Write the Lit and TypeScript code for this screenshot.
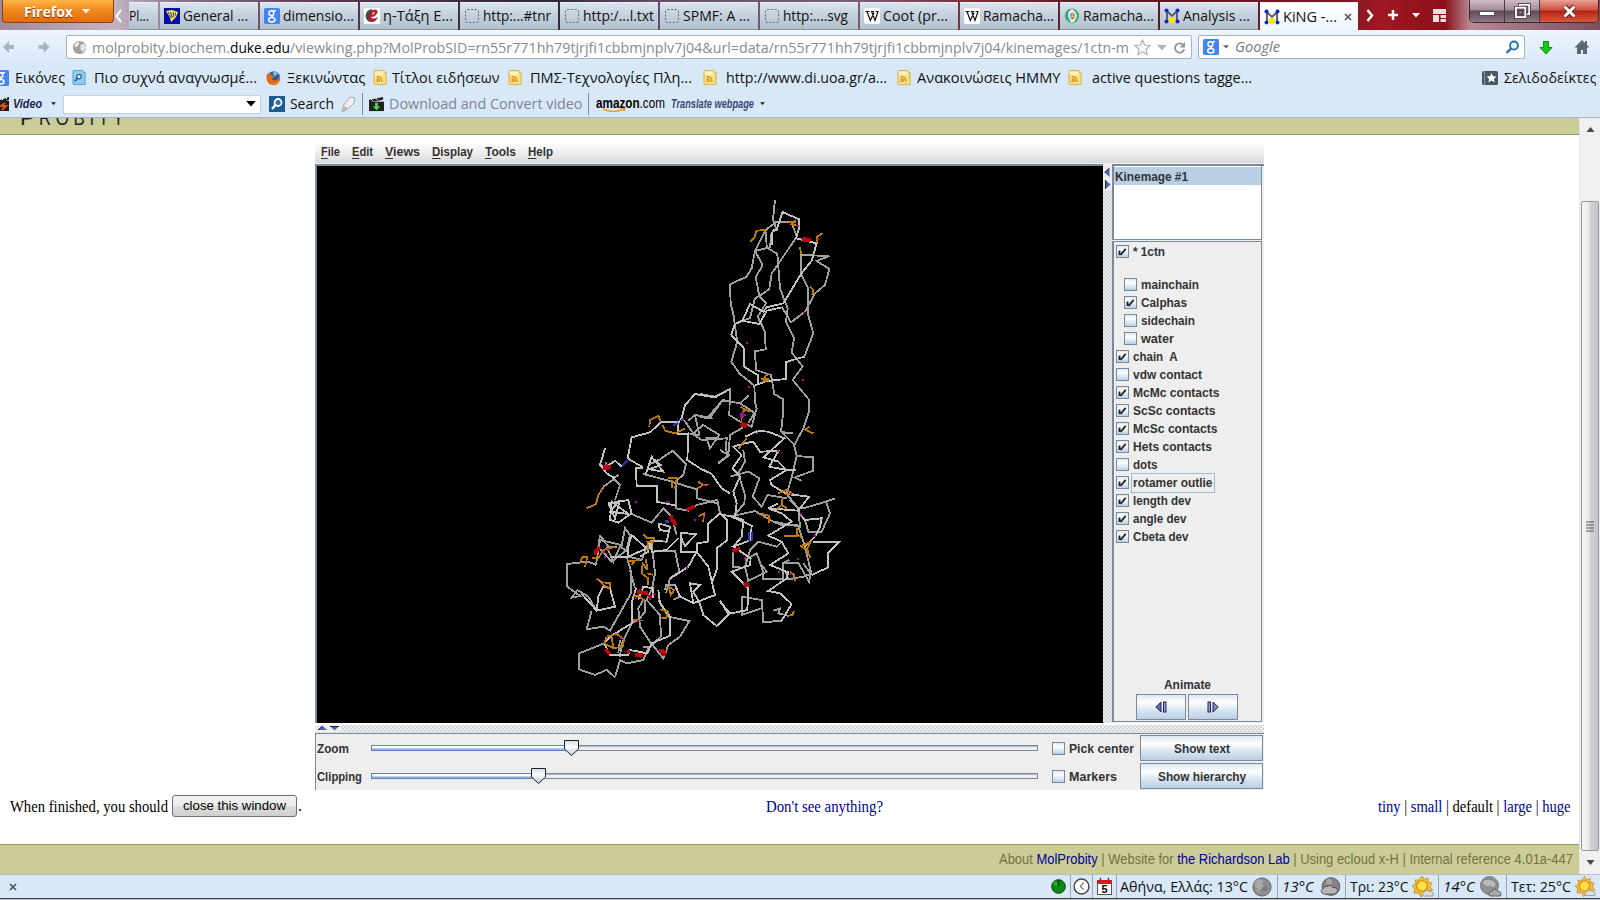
import { LitElement, html, css, svg } from "lit";
import { customElement, property } from "lit/decorators.js";

/** Inline text condensed or widened horizontally to fill a given width. */
@customElement("fit-text")
class FitText extends LitElement {
  static styles = css`
    :host { display: inline-block; white-space: pre; flex: none; }
    .run { display: inline-block; transform-origin: 0 50%; }
  `;
  @property({ type: Number }) w = 0;
  firstUpdated() {
    const run = this.renderRoot.querySelector(".run") as HTMLElement;
    const natural = run.getBoundingClientRect().width;
    this.style.width = this.w + "px";
    if (natural > 0) run.style.transform = `scaleX(${this.w / natural})`;
  }
  render() {
    return html`<span class="run"><slot></slot></span>`;
  }
}

const fit = (text: unknown, w: number) => html`<fit-text .w=${w}>${text}</fit-text>`;

/* ---------- icons ---------- */
const icon = (body: unknown, w = 16, h = 16, box = "0 0 16 16") =>
  html`<svg class="ico" width=${w} height=${h} viewBox=${box}>${body}</svg>`;

const googleG = svg`<rect width="16" height="16" rx="1.5" fill="#4285f4"/>
  <g fill="none" stroke="#fff" stroke-width="1.5"><circle cx="7.4" cy="5.2" r="2.4"/><path d="M9 3.2 12 2.4M9 7.2Q7 8.6 9 9.5"/><ellipse cx="7.8" cy="11.8" rx="3.1" ry="2.2"/></g>`;
const harp = svg`<rect width="16" height="16" fill="#0010a8"/><path d="M2 3 8 2l6 2-2 5-5 5-1-4Z" fill="#ffe94a"/><path d="M4 4l3 6M6.500 4l2 6M9 4l1 5M11.500 4.500v3" stroke="#0010a8" stroke-width=".8"/>`;
const eta = svg`<rect width="16" height="16" fill="#fff"/><path d="M8 1Q2 2 1.500 8q.5 5 5 6-2-4 1-8Z" fill="#4a4448"/><path d="M5 8Q6 1.500 11 1.500q4 .5 2 4T7 9q2 3 7 0-2 5-6 5T5 8Z" fill="#b41f2c"/><path d="M8 7q.5-3 2.500-3 1 1-2.500 3Z" fill="#fff"/>`;
const blank = svg`<rect x="1.5" y="1.5" width="13" height="13" rx="2" fill="none" stroke="#6d7680" stroke-width="1.1" stroke-dasharray="2.2 1.4"/>`;
const wiki = svg`<rect width="16" height="16" rx="2" fill="#fff"/><path d="M1.5 3.5h4M7 3.5h3M11.5 3.5h3M3 3.5l3.3 9L10.2 4.5M7.7 3.5 11 12.500l3-9" fill="none" stroke="#111" stroke-width="1.2"/>`;
const rama = svg`<circle cx="8" cy="8" r="7" fill="#dff0e4" stroke="#5ab896" stroke-width="1"/><path d="M6 1.500Q1 4 3 12M4 3Q2 9 6 14M10 1.500q7 5 1 12.500" fill="none" stroke="#27a06d" stroke-width="1.500"/><path d="M4 2Q1 8 5 13" fill="none" stroke="#3a9bb0"/><ellipse cx="8.500" cy="8" rx="2.800" ry="3.800" fill="#c9b78a"/><path d="M6.500 7h1.300M9 7h1.300M7.500 10h2" stroke="#555"/>`;
const molM = svg`<path d="M3 14V3l5 5 5-5v11" fill="none" stroke="#555a70" stroke-width="1.900"/><g fill="#1526c8"><circle cx="2.500" cy="2.500" r="2"/><circle cx="13.500" cy="2.500" r="2"/><circle cx="2.500" cy="13.500" r="2"/><circle cx="13.500" cy="13.500" r="2"/></g><circle cx="8" cy="12" r="3.200" fill="#ffe800"/>`;
const rss = svg`<path d="M2 0h9q1 0 1 1v1h2v13H2Q1 15 1 14V1Q1 0 2 0Z" fill="#f6de84" stroke="#cfae45" stroke-width=".9"/><rect x="2" y="1" width="9" height="4" fill="#fff3b8"/><g fill="none" stroke="#e48a1d" stroke-width="1.500"><path d="M4 6.500q5.500 0 5.500 5.500M4 9q3 0 3 3"/></g><circle cx="4.600" cy="11.500" r="1" fill="#e48a1d"/>`;
const docSearch = svg`<path d="M2 0h9q1 0 1 1v1h2v13H2Q1 15 1 14V1Q1 0 2 0Z" fill="#93cbec" stroke="#4a94c6" stroke-width=".9"/><circle cx="7.500" cy="6.500" r="2.400" fill="#e3f4ff" stroke="#23628f" stroke-width="1.300"/><path d="M5.800 8.300 3 11.500" stroke="#23628f" stroke-width="1.800"/>`;
const fox = svg`<circle cx="8.200" cy="7.600" r="6.800" fill="#2a5ca8"/><path d="M7 2.500q4-2 6 1L9 6Z" fill="#7fc0ea"/><path d="M1 3.500Q-1 12 5 15q6 2 9-3 2-4 .5-7-.5 4-3.500 5-4 1-5-1.500 1-1 3-1-.5-2.500-2.500-2.500Q4 5 5 3 2.500 3 1 3.500Z" fill="#e06a14"/><path d="M3 12q5 4 10-1-4 6-10 1Z" fill="#ffc83c"/>`;
const star = svg`<path d="M8 1l2.100 4.700 5 .5-3.800 3.400 1.100 5L8 12.100l-4.400 2.500 1.100-5L.9 6.200l5-.5Z" fill="#f5f8fb" stroke="#a9b0b8" stroke-width="1.100"/>`;
const moon = svg`<circle cx="11" cy="11" r="10" fill="#8d8d8d" stroke="#5c5c5c"/><circle cx="8.500" cy="8" r="5.500" fill="#a9a9a9"/><circle cx="13" cy="7" r="2" fill="#8a8a8a"/><circle cx="14" cy="13" r="3" fill="#7c7c7c"/><circle cx="7" cy="15" r="2" fill="#a2a2a2"/>`;
const moonCloud = svg`<circle cx="12" cy="10" r="9.300" fill="#858585" stroke="#5a5a5a"/><circle cx="10" cy="5" r="3" fill="#a8a8a8"/><path d="M3 17q-3-3 1-5 1-3 4-2 3-3 6 1 5 0 5 3 0 4-4 4H5Z" fill="#b5b5b5" stroke="#4c4c4c"/>`;
const moonCloud2 = svg`<circle cx="10" cy="9.500" r="9" fill="#909090" stroke="#777"/><path d="M2 6q6-6 14 0 2 5-3 6-2-3-5-1-4-1-6-5Z" fill="#b9b9b9" stroke="#777" stroke-width=".8"/><path d="M10 20q-2-4 3-5 2-4 5 0 5 1 3 5Z" fill="#a9a9a9" stroke="#5c5c5c"/>`;
const sun = svg`<path d="M10 0l2 3.500L16 2l0 4 4 1-2 4 3 3-5 1 0 4-4-1-3 3-2-4-5 0 1-4-3-3 4-2-1-4 4 0Z" fill="#f3c03c" stroke="#b98a2a" stroke-width=".8"/><circle cx="10" cy="10" r="5.400" fill="#ffe24a" stroke="#e08a14" stroke-width="1.300"/><path d="M11 20q-2-3 1-4 2-3 5-1 5 0 4 5Z" fill="#ddd" stroke="#999"/>`;

const tabs = [
  { i: harp, t: "General ...", w: 65 }, { i: googleG, t: "dimensio...", w: 71 },
  { i: eta, t: "η-Τάξη Ε...", w: 70 }, { i: blank, t: "http:...#tnr", w: 68 },
  { i: blank, t: "http:/...l.txt", w: 71 }, { i: blank, t: "SPMF: A ...", w: 67 },
  { i: blank, t: "http:....svg", w: 65 }, { i: wiki, t: "Coot (pr...", w: 65 },
  { i: wiki, t: "Ramacha...", w: 71 }, { i: rama, t: "Ramacha...", w: 71 },
  { i: molM, t: "Analysis ...", w: 67 },
];

const bookmarks = [
  { i: docSearch, cell: 194, lead: 7, t: "Πιο συχνά αναγνωσμέ...", w: 163 },
  { i: fox, cell: 107, lead: 6, t: "Ξεκινώντας", w: 78.5 },
  { i: rss, cell: 135, lead: 4, t: "Τίτλοι ειδήσεων", w: 107.5 },
  { i: rss, cell: 194.5, lead: 7, t: "ΠΜΣ-Τεχνολογίες Πλη...", w: 162 },
  { i: rss, cell: 194.5, lead: 8, t: "http://www.di.uoa.gr/a...", w: 161 },
  { i: rss, cell: 171, lead: 5, t: "Ανακοινώσεις ΗΜΜΥ", w: 143.5 },
  { i: rss, cell: 190, lead: 9, t: "active questions tagge...", w: 160 },
];

const groups = [
  { t: "mainchain", w: 58, on: false, sub: true }, { t: "Calphas", w: 46, on: true, sub: true },
  { t: "sidechain", w: 54, on: false, sub: true }, { t: "water", w: 33, on: false, sub: true },
  { t: "chain  A", w: 44.5, on: true }, { t: "vdw contact", w: 69, on: false },
  { t: "McMc contacts", w: 86.5, on: true }, { t: "ScSc contacts", w: 82.500, on: true },
  { t: "McSc contacts", w: 84.5, on: true }, { t: "Hets contacts", w: 79, on: true },
  { t: "dots", w: 24.5, on: false }, { t: "rotamer outlie", w: 79.5, on: true, focus: true },
  { t: "length dev", w: 58, on: true }, { t: "angle dev", w: 53.5, on: true },
  { t: "Cbeta dev", w: 55.5, on: true },
] as { t: string; w: number; on: boolean; sub?: boolean; focus?: boolean }[];

/* ---------- backbone traces, in thirds of a pixel, one set per region ---------- */
interface Region { x: number; y: number; grey: string[]; light: string[]; orange: string[]; red: string[]; blue: string[]; dots: string; }
const regions: Region[] = [
  {
    x: 700, y: 190,
    grey: [
      "225,30 219,88 230,120 215,125",
      "230,95 275,97 290,140 235,222 215,250 208,297 178,318 165,325 150,385 127,392",
      "230,95 197,120 165,183 210,172 215,125",
      "198,125 200,172 232,192 240,295 263,355 258,397 282,445 275,487 308,530 278,570 328,630 326,668 310,715 283,765",
      "165,183 188,225 167,262 178,318 198,340 173,380 195,425 197,478 165,484 168,540 213,555 223,612 250,628 248,680 243,725 283,765",
      "165,183 155,235 140,260 90,283 92,340 102,380 104,403 112,455 94,515 118,550 163,587 165,635 170,655 155,710 120,695 88,675 90,597 45,620 0,612",
      "313,500 340,430 323,370 323,292 303,252 303,195 388,198 350,213 388,237 375,285 345,310 315,365 273,397 245,350",
      "0,682 35,684 28,677 68,630 120,640 145,617", "120,640 163,668 145,700", "245,727 278,730",
    ],
    light: [
      "215,125 215,165", "288,145 350,160 335,212 303,252 250,340 200,352 190,365 150,342 127,392 104,403 94,435 132,475 132,530 173,555 173,580",
      "219,120 230,120 247,66 298,88 296,118 288,145",
      "245,352 200,362 178,402 127,392", "163,587 200,573 258,567 258,516 313,500",
    ],
    orange: ["150,155 162,145 170,122 197,120", "265,97 288,93 275,103 297,108", "368,130 350,140 350,158", "300,170 303,193", "330,290 338,297 340,308 335,315", "182,566 208,568 190,574 197,558 208,550", "122,650 135,660 152,665", "135,660 126,670 124,695", "310,717 340,730", "315,720 328,710"],
    red: ["306,147 332,149", "308,150 330,150", "122,700 140,706", "125,704 142,710"],
    blue: [],
    dots: "141,459 147,591 309,570 355,148 293,107 170,728 313,369 123,673 129,670 129,678 134,676 123,679",
  },
  {
    x: 560, y: 370,
    grey: [
      "510,95 487,92 450,143 405,135 385,152", "372,150 400,190 430,165 478,195 450,235 440,205 475,205",
      "395,190 425,210 500,205 497,240 508,255 475,280", "405,135 418,195 385,190",
      "175,315 160,325 180,345 165,390", "165,325 130,350",
      "250,312 325,332 410,358 412,385 472,400", "325,325 350,325 348,415 385,422 410,405 472,390 480,430",
      "265,285 300,268 338,242 378,282 370,315 345,335",
      "210,430 275,458 310,415 335,440 350,495", "120,495 115,530 155,575 200,540 210,495 195,475 185,525 120,510 108,585",
      "140,530 160,575 180,530 205,545", "110,585 85,575 20,582 22,650 60,678 35,683 52,660 85,680 110,722",
      "200,560 212,600 213,670 150,782 130,770 80,778 95,722", "278,545 345,542 358,605 330,625",
      "275,520 285,610 275,660", "315,660 318,645 345,645 360,680 340,690", "330,625 318,670",
      "250,690 235,715 240,770 270,815 310,865 325,825 360,800 388,753 325,740 295,690",
      "275,660 260,690 300,735 303,800 270,830 250,830", "255,690 255,725 235,750 215,760",
      "180,862 185,820 215,760", "165,922 180,870 200,880 250,870 265,835",
      "57,850 133,820", "57,850 57,898 105,915 140,900 165,922", "180,810 175,850",
      "120,495 145,530 170,530", "265,520 245,570 205,560", "210,600 225,655",
    ],
    light: [
      "510,57 465,82 405,72 375,105 365,145 355,158 355,192 385,192 382,270 420,295 455,312 485,355 510,370",
      "360,155 305,155 270,187 215,202 203,265 250,293", "135,235 120,285 140,290 165,272 185,290", "120,285 140,310 165,325",
      "250,293 228,295 230,348 290,347 290,395 348,407", "258,312 275,260 310,305 268,298 302,285 275,262",
      "480,430 445,460 443,515 412,520 410,545 362,547 362,488 408,493 375,528 362,500",
      "480,430 502,450 502,510 470,535 470,600 455,640", "410,545 445,590 465,675 400,700 390,640 420,645 400,665 418,697 430,735 470,768 510,730",
      "410,545 385,590 355,610 330,625", "345,645 360,680 400,700", "145,400 205,390 215,430 175,458 150,450 155,395 205,432 150,425 180,390 165,445 145,400",
      "295,460 330,470 320,515 270,512", "295,460 300,480 330,485", "205,560 205,530 215,495 260,535 205,560 155,560", "270,512 275,545 320,540 355,505", "268,515 265,545 240,560",
      "65,672 110,722 165,710 150,655 130,650 115,680 110,722",
      "228,655 215,700 215,760 150,800 133,820 150,855 205,855 210,840 262,850 275,820 330,797 330,740 300,700 295,660",
      "478,692 510,730", "235,690 250,650 280,655 280,685",
    ],
    orange: ["268,172 270,150 295,138 303,155", "308,165 315,182 345,190 375,175", "80,415 108,402 115,375 130,352", "138,277 142,300", "325,325 350,325 345,358", "335,330 335,355", "415,335 430,345 448,343", "430,345 412,355", "415,440 432,430 430,455", "60,575 68,562 82,562 75,590", "95,565 115,565 130,540 165,530", "110,627 128,637 150,640 148,657", "115,628 130,645 150,657", "200,575 222,572 240,570", "215,585 222,575", "250,492 262,505 282,505 280,515 262,515 265,540", "258,568 262,600 248,580 245,610 265,625 265,645", "262,610 280,615", "325,650 343,660 332,675 328,655", "140,800 170,792 192,808 188,830 160,835 150,830 133,820 140,800", "155,800 160,835", "215,680 235,678 255,692", "300,718 325,725 318,745 300,742", "220,750 250,752"],
    red: ["130,290 152,292", "128,294 148,296", "380,420 405,408", "330,440 338,452", "335,436 335,456", "338,450 348,466", "232,665 265,670", "236,662 250,672", "270,675 272,685", "137,838 152,853", "200,848 210,844", "226,856 250,856", "232,852 246,860", "298,842 318,845", "312,845 312,858", "106,555 108,542 118,532"],
    blue: ["340,165 355,160", "363,153 370,145", "187,288 203,270", "316,455 326,455"],
    dots: "228,396 320,396 325,396 404,450 432,441 132,546 135,560 229,685 270,687 282,672 381,594 183,804 235,752 432,345 145,536 141,286",
  },
  {
    x: 690, y: 370,
    grey: [
      "312,225 320,258 370,262 370,302 315,322 335,333", "272,187 307,188", "175,75 150,100", "160,172 120,195 115,255 85,278 115,255 90,240",
      "120,320 175,305 208,325 188,380 215,410 233,375 290,385", "312,225 320,258 305,322 290,372 325,415", "160,240 165,275 145,310 165,375 163,400 130,440",
      "120,440 195,423 250,455 330,470 325,415 300,390", "325,415 340,415 408,395 435,385", "408,395 420,430 395,485 355,485 345,450",
      "325,470 345,530 365,615 340,580", "205,515 260,530 275,515", "205,515 180,540 165,590 175,633 230,605 215,585",
      "165,570 200,550 218,600 218,627 278,628 278,580 298,570", "278,580 325,580 340,605 357,635 362,610", "285,600 295,628 340,620 365,610",
      "275,752 220,757 215,690 155,680 155,735 213,715", "250,455 275,465 325,465", "128,545 130,590 150,590", "250,722 270,715 265,730 295,737",
    ],
    light: [
      "203,183 235,185 283,205 220,262 265,275 290,300 240,330 245,345 290,372 357,380 325,422 235,415", "235,415 275,430 305,455 235,497 275,515 295,550 240,585 295,607 290,625 235,663 270,670 305,702 275,752",
      "165,200 203,183", "165,220 190,215 210,245 265,243 238,290 290,300 318,300", "165,220 130,230 155,255 128,295 150,320 130,365 140,400 135,440", "265,400 235,415",
      "90,432 125,440 185,467 182,510 130,530 182,565 180,585 125,605 175,655 172,720 115,732 90,692", "130,440 160,450 155,500 130,530", "328,430 345,450 395,445 390,470 375,500 345,530", "365,615 415,592 415,548 447,517 370,515",
    ],
    orange: ["145,237 170,205", "265,370 290,360 305,370 285,372", "260,418 275,405 290,415", "278,380 275,405", "238,458 238,437 218,432 222,442", "282,498 320,498 322,475", "320,490 335,505", "330,530 362,515 350,540 362,565", "335,530 358,545", "300,605 312,615 315,632", "290,738 308,735 312,722"],
    red: ["128,543 150,535", "165,638 168,650", "172,640 174,650"],
    blue: ["177,487 177,513", "186,487 186,513"],
    dots: "264,242 303,372 333,432 375,497 323,567 266,606 302,613 165,565 339,30 41,441",
  },
];

@customElement("app-root")
class AppRoot extends LitElement {
  static styles = css`
    :host { display: flex; flex-direction: column; width: 1600px; height: 900px; overflow: hidden; background: #fff; color: #111; font-family: "Open Sans", "Noto Sans", sans-serif; font-size: 14.5px; line-height: 20px; }
    * { box-sizing: border-box; }
    .ico { flex: none; display: block; }
    .row { display: flex; align-items: center; flex: none; }
    .grow { flex: 1; }
    /* tab strip */
    .tabs { height: 30px; align-items: stretch; background: linear-gradient(90deg, #a08a9c 0, #c4b4c2 115px, #8b7386 180px, #59374a 330px, #2c2a3c 550px, #684a68 650px, #7c6078 850px, #7a3440 960px, #581820 1100px, #7a1824 1340px, #a01824 1380px, #8c1018 1445px, #b88894 1470px, #7a5060 1600px); }
    .ff { width: 112px; height: 23px; margin-left: 2px; border: 1px solid #86401a; border-top: 0; border-radius: 0 0 4px 4px; background: linear-gradient(#ffb547, #f38a1e 45%, #e26b10); color: #fff; font-weight: 700; font-size: 14px; justify-content: center; gap: 9px; padding: 1px 2px 0 0; text-shadow: 0 1px 1px #743000; flex: none; display: flex; align-items: center; }
    .lt { width: 15px; padding: 2px 5px 0 0; justify-content: center; }
    .tab { width: 98px; height: 28px; margin: 2px 2px 0 0; padding: 0 0 0 4px; gap: 3px; background: linear-gradient(#d9e4ee, #c3d0dc 50%, #b3c1ce); border-top: 1px solid #e8eff6; border-bottom: 1px solid #8995a3; overflow: hidden; }
    .tab.part { width: 29px; padding-left: 0; }
    .tab.on { height: 28px; margin-right: 0; background: linear-gradient(#fff, #edf5fc); border-bottom: 0; }
    .tools { gap: 13px; padding-left: 8px; width: 110px; }
    .wins { height: 23px; margin-left: 1px; display: flex; border: 1px solid #3d2c35; border-top: 0; border-radius: 0 0 5px 5px; overflow: hidden; }
    .win { display: flex; align-items: center; justify-content: center; width: 35px; background: linear-gradient(#d0bcc6, #a48c9a 45%, #5f4a58 50%, #907884); border-right: 1px solid #4c3844; }
    .win.close { width: 58px; border: 0; background: linear-gradient(#e8a090, #cf5140 45%, #b02515 50%, #d8583a); }
    /* navigation */
    .chrome { background: linear-gradient(#edf5fc, #d9e8f7 40%); border-bottom: 1px solid #a3b8cc; height: 88px; flex: none; }
    .nav { height: 34px; }
    .field { display: flex; align-items: center; height: 24px; background: #fff; border: 1px solid #9fb2c6; border-radius: 2px; overflow: hidden; }
    .url { width: 1126px; margin-left: 15px; color: #8a8a8a; padding-left: 5px; padding-top: 1px; }
    .dom { color: #000; }
    .search { width: 327px; margin-left: 6px; padding-left: 4px; color: #777; font-style: italic; }
    .bm { height: 28px; }
    .tb { height: 22px; margin-top: 1px; }
    .cell { display: flex; align-items: center; overflow: hidden; flex: none; }
    .combo { width: 198px; height: 19px; background: #fff; border: 1px solid #c4d2e0; display: flex; align-items: center; justify-content: flex-end; padding-right: 4px; }
    .sep { width: 1px; height: 22px; background: #7e8b98; flex: none; }
    .vid { font: italic 700 12px "Liberation Sans", sans-serif; color: #1a2450; }
    .vid.blue { color: #3c4878; }
    .dim { color: #7d858d; }
    .amz { display: flex; margin: 0 1px 3px 7px; font: 14.5px/18px "Liberation Sans", sans-serif; color: #000; flex: none; background: url("data:image/svg+xml,%3Csvg xmlns='http://www.w3.org/2000/svg' width='69' height='20'%3E%3Cpath d='M7 15q10 5 21 0m-3-1 4 .3-1 3' fill='none' stroke='%23f39a1e' stroke-width='1.4'/%3E%3C/svg%3E") no-repeat; }
    /* page */
    .main { display: flex; height: 756px; flex: none; }
    .page { width: 1579px; display: flex; flex-direction: column; }
    .band { height: 17px; background: #cccc99; border-bottom: 1px solid #949c62; overflow: hidden; padding-left: 20px; display: flex; align-items: flex-end; gap: 4px; flex: none; color: #222; font: 20px/20px "Liberation Sans", sans-serif; }
    .band .w { margin-bottom: 6px; }
    .applet { margin: 6px 0 0 315px; width: 949px; height: 649px; background: #eee; flex: none; font: bold 12px/16px "Liberation Sans", sans-serif; color: #333; }
    .menu { height: 23px; display: flex; align-items: center; padding: 0 0 1px 6px; background: linear-gradient(#fff, #f6f6f6 30%, #dadada 94%, #eee 95%); }
    .menu u { text-decoration-thickness: 1px; text-underline-offset: 2px; }
    .split { display: flex; height: 559px; }
    .view { width: 788px; border: solid #7a8a99; border-width: 2px 0 0 2px; background: #000; }
    .view svg { display: block; }
    .vdiv { width: 9px; background: radial-gradient(circle, #98a2ac 0.5px, transparent 0.8px) 3px 0 / 4px 4px, radial-gradient(circle, #98a2ac 0.5px, transparent 0.8px) 1px 2px / 4px 4px, #eee; }
    .vdiv svg { display: block; background: #eee; }
    .side { width: 152px; padding-right: 2px; border-top: 2px solid #7a8a99; display: flex; flex-direction: column; }
    .list { height: 74px; background: #fff; border: solid #7a8a99; border-width: 0 1px 1px 2px; padding: 1px 0 0 0; }
    .sel { background: #b8cfe5; height: 18px; padding: 2px 0 0 1px; line-height: 16px; }
    .panel { margin-top: 1px; height: 481px; border: solid #7a8a99; border-width: 1px 1px 1px 2px; padding: 1px 0 1px 2px; display: flex; flex-direction: column; }
    .chk { display: flex; align-items: center; height: 18px; gap: 4px; flex: none; padding-bottom: 1px; }
    .chk.first { margin-bottom: 15px; }
    .chk.sub { padding-left: 8px; }
    .box { width: 13px; height: 13px; border: 1px solid #7a8a99; background: linear-gradient(#dde8f3, #fff 35%, #b8cfe5); flex: none; }
    .box svg { display: block; }
    .focus { outline: 1px solid #a3b8cc; outline-offset: 1px; }
    .anim { margin-top: auto; text-align: center; display: flex; flex-direction: column; align-items: center; gap: 1px; padding-right: 3px; }
    .btns { display: flex; gap: 2px; }
    .jbtn { display: flex; align-items: center; justify-content: center; border: 1px solid #7a8a99; background: linear-gradient(#dde8f3, #fff 32%, #dce7f2 60%, #b8cfe5); height: 26px; width: 50px; }
    .hdiv { height: 10px; border-top: 2px solid #fff; background: radial-gradient(circle, #98a2ac 0.5px, transparent 0.8px) 0 0 / 4px 4px, radial-gradient(circle, #98a2ac 0.5px, transparent 0.8px) 2px 2px / 4px 4px, #eee; }
    .hdiv svg { display: block; background: #eee; }
    .controls { border: solid #7a8a99; border-width: 1px 0 0 1px; height: 57px; }
    .ctl { display: flex; align-items: center; height: 28px; padding-left: 1px; }
    .ctl fit-text { padding-top: 1px; }
    .ctl .name { width: 54px; }
    .ctl .jbtn { width: 123px; }
    .ctl .box { margin: 0 4px 0 14px; }
    .ctl .lab { width: 71px; }
    .foot { display: flex; height: 54px; align-items: center; padding: 0 9px 22px 10px; font: 16px/20px "Liberation Serif", serif; color: #000; flex: none; }
    .foot > fit-text, .foot > .link { padding-top: 2px; }
    .close { width: 125px; height: 22px; border: 1px solid #707070; border-radius: 3px; background: linear-gradient(#f2f2f2, #ebebeb 50%, #ddd 51%, #cfcfcf); font: 13.3px/20px "Liberation Sans", sans-serif; display: flex; justify-content: center; margin-left: 4px; }
    .win.close { margin: 0; height: auto; border-radius: 0; }
    .link { color: #00009c; }
    .credit { height: 30px; border-top: 1px solid #999966; background: #cccc99; color: #737340; font: 14px/29px "Liberation Sans", sans-serif; display: flex; justify-content: flex-end; padding-right: 6px; flex: none; }
    .scroll { width: 21px; background: #f0f0f0; border-left: 1px solid #e3e3e3; display: flex; flex-direction: column; align-items: center; }
    .arrow { height: 22px; display: flex; align-items: center; }
    .thumb { margin-top: 61px; width: 18px; height: 650px; border: 1px solid #979797; border-radius: 2px; background: linear-gradient(90deg, #f5f5f5, #e9e9eb 45%, #d2d2d6 50%, #c4c4c9); display: flex; align-items: center; justify-content: center; }
    .status { height: 25px; border-top: 1px solid #b5bfd0; background: #d9e8f7; border-bottom: 1px solid #40404c; padding-right: 4px; }
    .status .sep { height: 23px; background: #9aa5b0; }
    .it { font-style: italic; }
    .edge { height: 1px; background: #c9b9c6; }
  `;

  private seg(gap: number, content: unknown) {
    return html`<span class="cell" style="padding-left:${gap}px">${content}</span>`;
  }

  private caret(color = "#222", w = 8) {
    return html`<svg class="ico" width=${w} height=${w / 2 + 1} viewBox="0 0 8 5"><path d="M0 0h8L4 4.500Z" fill=${color} /></svg>`;
  }

  private box(on: boolean) {
    return html`<span class="box">${on ? html`<svg width="11" height="11" viewBox="0 0 11 11"><path d="M2.500 4.500V9M3.500 9L8.700 2.800" fill="none" stroke="#222" stroke-width="1.900" /></svg>` : ""}</span>`;
  }

  private molecule() {
    const line = (color: string, width: number) => (p: string) =>
      svg`<polyline points=${p} fill="none" stroke=${color} stroke-width=${width}></polyline>`;
    return html`<svg width="786" height="557" viewBox="317 166 786 557" shape-rendering="crispEdges">
      ${regions.map((r) => svg`<g transform="translate(${r.x} ${r.y}) scale(0.33333)">
        ${r.grey.map(line("#a0a0a0", 5.6))}${r.light.map(line("#c2c2c2", 5.6))}
        ${r.orange.map(line("#c07806", 5.4))}${r.blue.map(line("#3035a8", 7))}${r.red.map(line("#bb0404", 11))}
        ${r.dots.split(" ").map((d) => { const [x, y] = d.split(",").map(Number); return svg`<rect x=${x - 3} y=${y - 3} width="6" height="6" fill="#a808a8"></rect>`; })}
      </g>`)}
    </svg>`;
  }

  private slider(pos: number) {
    return html`<svg class="ico" width="667" height="18" viewBox="0 0 667 18">
      <rect x=".5" y="6.500" width="666" height="5" fill="#eee" stroke="#7a8a99" />
      <path d="M1 7.500h665" stroke="#a9bac9" />
      <rect x=".5" y="6.500" width=${pos} height="5" fill="#fff" stroke="#6382bf" />
      <path d="M1 9.500H${pos}" stroke="#b8cfe5" /><path d="M1 10.500H${pos}" stroke="#9cb3d8" />
      <path d="M${pos - 7} 1.500h14v8.500l-7 6.500-7-6.500Z" fill="url(#thumb)" stroke="#222" />
      <defs><linearGradient id="thumb" x2="0" y2="1"><stop offset="0" stop-color="#c8daec" /><stop offset=".4" stop-color="#fff" /><stop offset="1" stop-color="#b3cbe2" /></linearGradient></defs>
    </svg>`;
  }

  render() {
    const menu: [string, number, number][] = [["File", 19, 12], ["Edit", 21, 12], ["Views", 35, 12], ["Display", 41, 12], ["Tools", 31, 12], ["Help", 25, 0]];
    return html`
      <div class="row tabs">
        <div class="ff">${fit("Firefox", 49)}${this.caret("#fff", 8)}</div>
        <div class="row lt">${icon(svg`<path d="M6 1 1.500 7 6 13" fill="none" stroke="#fff" stroke-width="2"/>`, 8, 14, "0 0 8 14")}</div>
        <div class="row tab part">${fit("Pl...", 20)}</div>
        ${tabs.map((t) => html`<div class="row tab">${icon(t.i)}${fit(t.t, t.w)}</div>`)}
        <div class="row tab on">${icon(molM)}${fit("KiNG -...", 54)}${this.seg(4, icon(svg`<path d="M1 1l6 6M7 1 1 7" stroke="#555" stroke-width="1.700"/>`, 8, 8, "0 0 8 8"))}</div>
        <div class="row tools">
          ${icon(svg`<path d="M1.500 1 6 6.500 1.500 12" fill="none" stroke="#fff" stroke-width="2.500"/>`, 8, 13, "0 0 8 13")}
          ${icon(svg`<path d="M6 1v10M1 6h10" stroke="#fff" stroke-width="2.500"/>`, 12, 12, "0 0 12 12")}
          ${this.caret("#fff", 8)}
          ${icon(svg`<g fill="#f4dada"><rect width="13" height="5"/><rect y="6" width="6" height="7"/><rect x="7.500" y="6" width="5.500" height="3"/><rect x="7.500" y="10" width="5.500" height="3"/></g>`, 13, 13, "0 0 13 13")}
        </div>
        <div class="wins">
          <div class="win">${icon(svg`<rect x=".5" y=".5" width="15" height="4" fill="#fff" stroke="#554"/>`, 16, 9, "0 -4 16 9")}</div>
          <div class="win">${icon(svg`<g fill="none"><rect x="6" y="2" width="10" height="10" stroke="#433" stroke-width="3.500"/><rect x="6" y="2" width="10" height="10" stroke="#fff" stroke-width="1.800"/><rect x="2" y="5" width="10" height="10" fill="#8a7480" stroke="#433" stroke-width="3.500"/><rect x="2" y="5" width="10" height="10" stroke="#fff" stroke-width="2"/><rect x="5" y="8" width="4" height="4" stroke="#433"/></g>`, 17, 16, "0 0 18 17")}</div>
          <div class="win close">${icon(svg`<path d="M2 1l10 11M12 1 2 12" stroke="#5a2a24" stroke-width="5"/><path d="M2 1.500l10 10M12 1.500 2 11.500" stroke="#fff" stroke-width="3"/>`, 15, 13, "0 0 14 13")}</div>
        </div>
      </div>
      <div class="chrome">
        <div class="row nav">
          ${this.seg(2, icon(svg`<path d="M7 1 1 7l6 6V9h5V5H7Z" fill="#a8b4c0"/>`, 13, 14, "0 0 13 14"))}
          ${this.seg(22, icon(svg`<path d="M6 1l6 6-6 6V9H1V5h5Z" fill="#a8b4c0"/>`, 14, 14, "0 0 13 14"))}
          <div class="field url">
            ${icon(svg`<circle cx="8" cy="8" r="7" fill="#a0a0a0"/><path d="M3 4q3-3 5-1L6 7 3 8Zm6 1 4-1 2 4-3 5-3-3Z" fill="#e6e6e6"/>`, 15, 15)}
            ${this.seg(5, html`${fit("molprobity.biochem.", 138)}<span class="dom">${fit("duke.edu", 60)}</span>${fit("/viewking.php?MolProbSID=rn55r771hh79tjrjfi1cbbmjnplv7j04&url=data/rn55r771hh79tjrjfi1cbbmjnplv7j04/kinemages/1ctn-m", 839)}`)}
            ${this.seg(5, icon(star, 17, 17))}
            ${this.seg(6, this.caret("#a9b3bd", 10))}
            ${this.seg(6, icon(svg`<path d="M11.500 5A5 5 0 1 0 12 9" fill="none" stroke="#8d99a5" stroke-width="2"/><path d="M13 1v6H7Z" fill="#8d99a5"/>`, 13, 13, "0 0 14 14"))}
          </div>
          <div class="field search">
            ${icon(googleG)}${this.seg(4, this.caret("#666", 6))}${this.seg(6, fit("Google", 45))}
            <span class="grow"></span>${this.seg(0, icon(svg`<circle cx="9" cy="5.500" r="4" fill="#eaf4ff" stroke="#2f6ca8" stroke-width="1.800"/><path d="M6 8.500 1.500 13" stroke="#2f6ca8" stroke-width="2.400"/>`, 14, 14, "0 0 14 14"))}${this.seg(5, "")}
          </div>
          ${this.seg(14, icon(svg`<path d="M4.500 1h5v6H13L7 13.500 1 7h3.500Z" fill="#18c818" stroke="#0c8c14"/>`, 14, 15, "0 0 14 14"))}
          ${this.seg(21, icon(svg`<path d="M8 1 .5 8.500H3V15h4v-4h2v4h4V8.500h2.500L13 6V2h-2v2Z" fill="#5b6773"/>`, 16, 16))}
        </div>
        <div class="row bm">
          <div class="cell" style="width:72px">${icon(googleG, 9, 16, "7 0 9 16")}${this.seg(6, fit("Εικόνες", 50))}</div>
          ${bookmarks.map((b) => html`<div class="cell" style="width:${b.cell}px">${icon(b.i, 15, 16)}${this.seg(b.lead, fit(b.t, b.w))}</div>`)}
          <span class="grow"></span>
          ${icon(svg`<rect y="1" width="16" height="14" rx="1.500" fill="#4c5661"/><path d="M2.500 1v14" stroke="#8d98a4"/><path d="M9.500 3l1.500 3.300 3.500.3-2.600 2.300.8 3.500-3.200-1.900-3.100 1.900.8-3.500L4.600 6.600l3.500-.3Z" fill="#fff"/>`)}
          ${this.seg(6, fit("Σελιδοδείκτες", 92.5))}${this.seg(4, "")}
        </div>
        <div class="row tb">
          ${icon(svg`<rect y="4" width="9" height="10" fill="#1b1b1b"/><path d="M0 3 9 0v3L0 6Z" fill="#222"/><path d="M1 1l2 2M5 0l2 2" stroke="#eee"/><path d="M5 6 1 9h5l-4 4" fill="none" stroke="#f04a1c" stroke-width="2"/>`, 9, 14, "0 0 9 14")}
          <span class="vid">${this.seg(4, fit("Video", 29))}</span>${this.seg(9, this.caret("#222", 5))}${this.seg(7, html`<span class="combo">${this.caret("#000", 10)}</span>`)}
          ${this.seg(8, icon(svg`<rect width="16" height="16" fill="#1e5c90"/><circle cx="9" cy="6.500" r="3.500" fill="#2c74ac" stroke="#fff" stroke-width="1.800"/><path d="M6.500 9 3 13" stroke="#fff" stroke-width="2.400"/>`))}
          ${this.seg(5, fit("Search", 44))}
          ${this.seg(7, icon(svg`<path d="M9 1l5 1-1 5-6 6-5-3Z" fill="#eee" stroke="#aaa"/><path d="M2 10l5 3-4 3H0Z" fill="#bbb"/>`))}
          ${this.seg(5, html`<span class="sep"></span>`)}
          ${this.seg(6, icon(svg`<path d="M0 3 15 0v3L0 5.500Z" fill="#222"/><rect y="5" width="16" height="10" fill="#1c241c"/><path d="M2 2l2 2M7 1l2 2" stroke="#fff"/><path d="M6.500 6h3v4H12l-4 4-4-4h2.500Z" fill="#58d048"/>`, 15, 15))}
          <span class="dim">${this.seg(5, fit("Download and Convert video", 193.5))}</span>
          ${this.seg(5, html`<span class="sep"></span>`)}
          <span class="amz">${fit(html`<b>amazon</b>.com`, 69)}</span>
          <span class="vid blue">${this.seg(5, fit("Translate webpage", 83))}</span>${this.seg(6, this.caret("#222", 5))}
        </div>
      </div>
      <div class="main">
        <div class="page">
          <div class="band"><span class="w">${fit("P", 15)}</span><span class="w">${fit("R O B I T Y", 85)}</span></div>
          <div class="applet">
            <div class="menu">${menu.map(([t, w, g]) => html`<span style="margin-right:${g}px">${fit(html`<u>${t[0]}</u>${t.slice(1)}`, w)}</span>`)}</div>
            <div class="split">
              <div class="view">${this.molecule()}</div>
              <div class="vdiv"><svg width="9" height="26"><path d="M6.500 4v9L1.500 8.500Z" fill="#4a62b8" /><path d="M2.500 16v9l5-4.500Z" fill="#4a62b8" /><path d="M6.500 4 1.500 8.500M2.500 16v9" stroke="#222" /></svg></div>
              <div class="side">
                <div class="list"><div class="sel">${fit("Kinemage #1", 73)}</div></div>
                <div class="panel">
                  <div class="chk first">${this.box(true)}${fit("* 1ctn", 32)}</div>
                  ${groups.map((g) => html`<div class="chk ${g.sub ? "sub" : ""}">${this.box(g.on)}<span class=${g.focus ? "focus" : ""}>${fit(g.t, g.w)}</span></div>`)}
                  <div class="anim">
                    ${fit("Animate", 47)}
                    <div class="btns">
                      <div class="jbtn">${icon(svg`<path d="M6 1v10L.8 6Z" fill="#6a6ab0" stroke="#222255"/><rect x="8.500" y="1" width="2.500" height="10" fill="#9c9cd0" stroke="#222255"/>`, 12, 12, "0 0 12 12")}</div>
                      <div class="jbtn">${icon(svg`<path d="M6 1v10l5.200-5Z" fill="#8a8ac8" stroke="#222255"/><rect x="1" y="1" width="2.500" height="10" fill="#9c9cd0" stroke="#222255"/>`, 12, 12, "0 0 12 12")}</div>
                    </div>
                  </div>
                </div>
              </div>
            </div>
            <div class="hdiv"><svg width="26" height="7"><path d="M3 5h9L7.500 1Z" fill="#4a62b8" /><path d="M15 1h9l-4.500 4.500Z" fill="#4a62b8" /><path d="M3 5 7.500 1M15 1.500h9" stroke="#222" /></svg></div>
            <div class="controls">
              <div class="ctl"><span class="name">${fit("Zoom", 32)}</span>${this.slider(200.5)}${this.box(false)}<span class="lab">${fit("Pick center", 65)}</span><div class="jbtn">${fit("Show text", 56)}</div></div>
              <div class="ctl"><span class="name">${fit("Clipping", 45)}</span>${this.slider(167.5)}${this.box(false)}<span class="lab">${fit("Markers", 48)}</span><div class="jbtn">${fit("Show hierarchy", 88)}</div></div>
            </div>
          </div>
          <div class="foot">
            ${fit("When finished, you should", 158)}<span class="close">${fit("close this window", 103)}</span><span>${this.seg(1, ".")}</span>
            <span class="link">${this.seg(464, fit("Don't see anything?", 117))}</span>
            <span class="grow"></span>
            ${fit(html`<span class="link">tiny</span> | <span class="link">small</span> | default | <span class="link">large</span> | <span class="link">huge</span>`, 192.5)}
          </div>
          <div class="credit">${fit(html`About <span class="link">MolProbity</span> | Website for <span class="link">the Richardson Lab</span> | Using ecloud x-H | Internal reference 4.01a-447`, 574)}</div>
        </div>
        <div class="scroll">
          <div class="arrow">${icon(svg`<path d="M0 5 4 0l4 5Z" fill="#444"/>`, 9, 5, "0 0 8 5")}</div>
          <div class="thumb">${icon(svg`<path d="M0 1h8M0 4h8M0 7h8M0 10h8" stroke="#555"/>`, 8, 11, "0 0 8 11")}</div>
          <div class="arrow">${icon(svg`<path d="M0 0h8L4 5Z" fill="#444"/>`, 9, 5, "0 0 8 5")}</div>
        </div>
      </div>
      <div class="row status">
        ${this.seg(9, icon(svg`<path d="M1 1l6 6M7 1 1 7" stroke="#555" stroke-width="1.700"/>`, 8, 8, "0 0 8 8"))}
        <span class="grow"></span>
        ${icon(svg`<circle cx="8" cy="8" r="7.300" fill="#0a8a12" stroke="#063c08"/><path d="M8 1v6" stroke="#024006" stroke-width="2"/><circle cx="5" cy="5" r="2.500" fill="#2ca030"/>`, 15, 15)}
        ${this.seg(4, html`<span class="sep"></span>`)}
        ${this.seg(2, icon(svg`<circle cx="8" cy="8" r="7" fill="#fff" stroke="#444" stroke-width="1.300"/><path d="M10 4 7 8l3 3" fill="none" stroke="#666"/>`, 17, 17))}
        ${this.seg(2, html`<span class="sep"></span>`)}
        ${this.seg(4, html`<svg class="ico" width="15" height="17" viewBox="0 0 15 17"><rect x=".5" y="2.500" width="14" height="14" fill="#fff" stroke="#555" /><rect y="2" width="15" height="4" fill="#d81818" /><path d="M3.500 0v3M11.500 0v3" stroke="#444" stroke-width="1.500" /><text x="4.500" y="15" font-size="11" font-weight="700" font-family="Liberation Sans">5</text></svg>`)}
        ${this.seg(4, html`<span class="sep"></span>`)}
        ${this.seg(3, fit("Αθήνα, Ελλάς: 13°C", 128))}${this.seg(4, icon(moon, 20, 20, "0 0 22 22"))}
        ${this.seg(5, html`<span class="sep"></span>`)}
        <span class="it">${this.seg(4, fit("13°C", 32))}</span>${this.seg(5, icon(moonCloud, 22, 20, "0 0 22 21"))}
        ${this.seg(4, html`<span class="sep"></span>`)}
        ${this.seg(4, fit("Τρι: 23°C", 58.5))}${this.seg(4, icon(sun, 22, 21, "0 0 22 21"))}
        ${this.seg(4, html`<span class="sep"></span>`)}
        <span class="it">${this.seg(4, fit("14°C", 32))}</span>${this.seg(4, icon(moonCloud2, 23, 21, "0 0 22 21"))}
        ${this.seg(4, html`<span class="sep"></span>`)}
        ${this.seg(4, fit("Τετ: 25°C", 60))}${this.seg(4, icon(sun, 21, 21, "0 0 22 21"))}
      </div>
      <div class="edge"></div>
    `;
  }
}
